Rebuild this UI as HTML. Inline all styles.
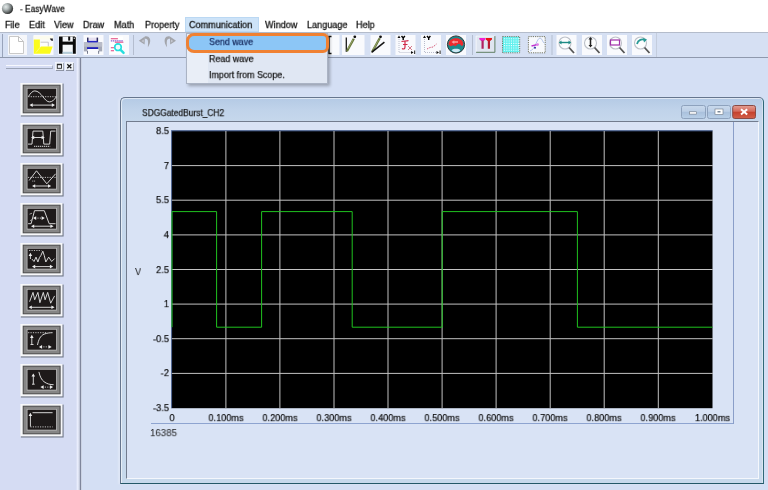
<!DOCTYPE html>
<html>
<head>
<meta charset="utf-8">
<title>EasyWave</title>
<style>
html,body{margin:0;padding:0;}
body{width:768px;height:490px;overflow:hidden;position:relative;background:#d4dff4;font-family:"Liberation Sans",sans-serif;font-size:9.5px;color:#111;}
.abs{position:absolute;}
#titlebar{left:0;top:0;width:768px;height:17px;background:#fff;}
#menubar{left:0;top:17px;width:768px;height:15px;background:#fff;}
.mi{position:absolute;top:19.5px;-webkit-text-stroke:.3px #111;transform:scale(.91,.9);transform-origin:0 0;will-change:transform;font-size:10px;line-height:11px;color:#111;white-space:nowrap;}
#toolbar{left:0;top:32px;width:768px;height:26.2px;background:#d6e0f3;border-top:1px solid #b4bccb;border-bottom:1.6px solid #8f99ad;box-sizing:border-box;}
#leftpanel{left:0;top:58.2px;width:79px;height:432px;background:#d5dcf3;}
#vsep{left:75.6px;top:58.2px;width:3.2px;height:432px;background:linear-gradient(90deg,rgba(234,238,252,0),#e9edfc 45%,#e9edfc 70%,#cdd3e4);border-right:0;}
#vsep2{left:79.7px;top:58.2px;width:1.5px;height:432px;background:#7f869c;box-shadow:-1px 0 0 #c3c9da,1px 0 0 #cbd3e4;}
#mdi{left:80px;top:58.2px;width:688px;height:432px;background:#d6e0f3;}
#dropdown{left:186px;top:32.5px;width:142.4px;height:51.7px;background:linear-gradient(90deg,#e9eef7 0,#e9eef7 21px,#e0e7f3 21px);border:1px solid #aab3c4;box-sizing:border-box;box-shadow:2px 2px 3px rgba(0,0,0,.28);}
.di{position:absolute;left:24px;-webkit-text-stroke:.25px #111;transform:scale(.89,.9);transform-origin:0 0;will-change:transform;font-size:10px;line-height:11px;color:#111;white-space:nowrap;}
#child{left:120px;top:97px;width:644px;height:387px;box-sizing:border-box;border:1.2px solid #66768e;border-right-color:#2f6878;border-bottom-color:#245868;border-radius:5px 5px 0 0;background:linear-gradient(#b4cae5,#c0d3ea 12px,#c6d8ec 24px,#c7d9ec);box-shadow:inset 1px 1px 0 rgba(255,255,255,.55),inset -1px 0 0 rgba(255,255,255,.35),-2px 0 2px rgba(255,255,255,.25);}
#client{left:126.3px;top:121px;width:633px;height:357.5px;box-sizing:border-box;border:1.2px solid #727c8e;border-right-color:#f4f7fc;border-bottom-color:#f4f7fc;background:#d9e3f5;}
.yl{-webkit-text-stroke:.2px #111;position:absolute;width:26px;text-align:right;font-size:10px;line-height:11px;color:#000;left:142.8px;margin-top:.5px;transform:scale(.93,.9);transform-origin:100% 100%;will-change:transform;}
.xl{-webkit-text-stroke:.2px #111;position:absolute;width:60px;text-align:center;font-size:10px;line-height:11px;color:#000;top:412px;transform:scale(.915,.9);transform-origin:50% 100%;will-change:transform;}
</style>
</head>
<body>
<div id="titlebar" class="abs"></div>
<svg class="abs" style="left:1.2px;top:1.6px" width="13" height="13" viewBox="0 0 13 13"><defs><radialGradient id="gb" cx="35%" cy="35%" r="70%"><stop offset="0" stop-color="#e4eaea"/><stop offset=".35" stop-color="#b4bcbc"/><stop offset=".7" stop-color="#6a7070"/><stop offset="1" stop-color="#242424"/></radialGradient></defs><circle cx="6.5" cy="6.5" r="5.6" fill="url(#gb)"/></svg>
<div class="abs" style="left:20px;top:3.5px;font-size:10px;line-height:11px;transform:scale(.836,.9);transform-origin:0 0;will-change:transform;-webkit-text-stroke:.3px #111;">- EasyWave</div>
<div id="menubar" class="abs"></div>
<div class="abs" style="left:184.5px;top:17px;width:74.2px;height:14.7px;box-sizing:border-box;background:#cde3f8;border:1px solid #bbd8f3;"></div>
<div class="mi" style="left:5px">File</div>
<div class="mi" style="left:29px">Edit</div>
<div class="mi" style="left:54px">View</div>
<div class="mi" style="left:83px">Draw</div>
<div class="mi" style="left:114px">Math</div>
<div class="mi" style="left:145px">Property</div>
<div class="mi" style="left:189px">Communication</div>
<div class="mi" style="left:265px">Window</div>
<div class="mi" style="left:307px">Language</div>
<div class="mi" style="left:356px">Help</div>
<div id="toolbar" class="abs"></div>

<!-- toolbar icons -->
<div class="abs" style="left:2.2px;top:34px;width:1px;height:23px;background:#98a3ba;"></div>
<svg class="abs" style="left:0;top:0" width="768" height="60" viewBox="0 0 768 60">
<!-- new -->
<g transform="translate(8,35)"><rect x="0" y="0" width="19" height="20" fill="#f6f7fa"/><path d="M1.5 1.5H10.5L15.5 6.5V18.5H1.5Z" fill="#fff" stroke="#c9c9c9" stroke-width="1"/><path d="M10.5 1.5V6.5H15.5" fill="none" stroke="#c0c0c0" stroke-width="1"/></g>
<!-- open -->
<g transform="translate(33.5,35)"><rect x="0" y="0" width="20" height="20" fill="#f9fafd"/><rect x="0" y="1" width="19.500" height="3.600" fill="#fcfcef"/><rect x="7.100" y="5.800" width="8.100" height="5.800" fill="#fdfdfd"/><path d="M7.100 7.200H14.800V11.600" fill="none" stroke="#b9b9bf" stroke-width=".8"/><path d="M16.300 3.400H19.300V6L17.600 5.600Z" fill="#1a1a22"/><path d="M.3 4.400H6.400V12.500L7.500 11.600H19.200L16.500 18.700H.3Z" fill="#fbfb1e"/><path d="M6.600 12.300L2.500 17.500" stroke="#fdfd8a" stroke-width=".7"/></g>
<!-- save -->
<g transform="translate(58.5,35)"><rect x="0" y="0" width="18" height="20" fill="#f9fafd"/><path d="M.5 1.600H16.300L17.300 2.600V18.800H.5Z" fill="#0a0a0a"/><rect x="4.100" y="1.600" width="10.200" height="5" fill="#f6f8fb"/><rect x="9.700" y="1.600" width="2" height="4" fill="#0a0a0a"/><rect x="4.100" y="9.700" width="10.200" height="9.100" fill="#f4f7f9"/><rect x="4.100" y="16.800" width="10.200" height="2" fill="#b4ccd9"/><rect x="15.200" y="2.600" width="1.100" height="1.400" fill="#ddd"/></g>
<!-- print -->
<g transform="translate(83.5,35)"><rect x="0" y="0" width="20" height="20" fill="#f9fafd"/><rect x="5" y="2.600" width="8.500" height="3.500" fill="#e6e0f0"/><rect x="3.500" y="2.600" width="1.500" height="4.800" fill="#2b2b5e"/><rect x="13.100" y="2.600" width="1.500" height="4.800" fill="#2b2b5e"/><rect x=".4" y="7.200" width="18.300" height="9.200" fill="#a4a8b6"/><rect x=".4" y="7.200" width="18.300" height="4.500" fill="#b9bcc9"/><rect x="4" y="5.900" width="10.200" height="1.500" fill="#2626c4"/><rect x="3.500" y="12.200" width="11.100" height="1.800" fill="#1c1cb8"/><rect x="4" y="14" width="11.100" height="4.800" fill="#f9fafd"/><rect x="3.500" y="16" width=".8" height="2.800" fill="#555a70"/><rect x="14.800" y="16" width=".8" height="2.800" fill="#555a70"/></g>
<!-- preview -->
<g transform="translate(109,35)"><rect x="0" y="0" width="20" height="20" fill="#f9fafd"/><rect x=".8" y="1.500" width="13.200" height="17.300" fill="#fff"/><path d="M1.800 3.800H8.900M1.800 12.700H5.400M1.800 15.800H5" stroke="#e0407f" stroke-width="1.100"/><path d="M1.800 5.800H14" stroke="#8a5fd0" stroke-width="1.300" stroke-dasharray="1.500 .6"/><path d="M5.800 7.200H14.400" stroke="#e0407f" stroke-width="1"/><circle cx="9" cy="12.200" r="3.300" fill="#ecffff" stroke="#27dede" stroke-width="1.700"/><path d="M11.600 14.800L14.600 17.900" stroke="#27dede" stroke-width="2.400" stroke-linecap="round"/></g>
<!-- sep -->
<rect x="133" y="35" width="1" height="20" fill="#b4bdcf"/>
<!-- undo -->
<g transform="translate(138,35)"><path d="M6.900 1.400C9 1 11 1.600 12 4C12.800 6.500 11.500 10 9.900 12.200C9.800 10.500 10.300 8 9.900 5.800C9.500 4.200 8.300 3.700 6.900 3.800Z" fill="#a2a4aa"/><path d="M.8 5.800L6.900 1.400L6.600 9.500Z" fill="#a2a4aa"/><path d="M5.800 4.500L3.500 6L5.700 7.500Z" fill="#c6c9d2"/></g>
<!-- redo -->
<g transform="translate(176.800,35) scale(-1,1)"><path d="M6.900 1.400C9 1 11 1.600 12 4C12.800 6.500 11.500 10 9.900 12.200C9.800 10.500 10.300 8 9.900 5.800C9.500 4.200 8.300 3.700 6.900 3.800Z" fill="#a2a4aa"/><path d="M.8 5.800L6.900 1.400L6.600 9.500Z" fill="#a2a4aa"/><path d="M5.800 4.500L3.500 6L5.700 7.500Z" fill="#c6c9d2"/></g>
<!-- partial icon -->
<g transform="translate(319.5,35)"><rect x="0" y="0" width="20" height="20" fill="#f9fafd"/><path d="M12 1.500H9.500V18.500H12" fill="none" stroke="#111" stroke-width="1.400"/></g>
<!-- pen1 -->
<g transform="translate(344.5,35)"><rect x="-2.500" y="0" width="22.500" height="20" fill="#f9fafd"/><path d="M1.800 2.600V16.800" stroke="#1a1a1a" stroke-width="1.300"/><path d="M2.400 16.300L9.300 3.800" stroke="#66763a" stroke-width="2.300"/><path d="M3.300 14L8.300 5" stroke="#a8b47a" stroke-width=".7"/><circle cx="10.300" cy="1.800" r="1.400" fill="#111"/></g>
<!-- pen2 -->
<g transform="translate(370,35)"><rect x=".5" y="0" width="20" height="20" fill="#f9fafd"/><path d="M2.200 16.800L9.700 3.300" stroke="#66763a" stroke-width="2.300"/><path d="M3.300 14.300L8.700 4.800" stroke="#a8b47a" stroke-width=".7"/><path d="M1.600 17.300L14.400 7.200" stroke="#141414" stroke-width="1.500"/><circle cx="10.500" cy="1.800" r="1.400" fill="#111"/></g>
<!-- Fx -->
<g transform="translate(395.500,35)"><rect x="0" y="0" width="20" height="20" fill="#f9fafd"/><path d="M3.500 2V17.500H16" fill="none" stroke="#b9bccb" stroke-width="1" stroke-dasharray="1 1"/><path d="M2 3L3.500 .5L5 3Z" fill="#111"/><path d="M15.500 16L18 17.500L15.500 19Z" fill="#111"/><path d="M6 1L7.700 3L9.400 1M7.700 3V5" stroke="#000" stroke-width="1.400" fill="none"/><path d="M6 6.500C8 5.500 11 6.500 13 5.500M9.500 6V12C9.500 14 8 14.500 6.500 13.500M7.500 9.500H12" stroke="#d02848" stroke-width="1.200" fill="none"/><path d="M12.500 11L16.500 15M16.500 11L12.500 15" stroke="#d06a7c" stroke-width=".9"/><rect x="18.500" y="15.500" width="1.200" height="3.500" fill="#444"/></g>
<!-- graph -->
<g transform="translate(421,35)"><rect x="0" y="0" width="20" height="20" fill="#f9fafd"/><path d="M3.500 2V17.500H16" fill="none" stroke="#b9bccb" stroke-width="1" stroke-dasharray="1 1"/><path d="M2 3L3.500 .5L5 3Z" fill="#111"/><path d="M15.500 16L18 17.500L15.500 19Z" fill="#111"/><path d="M6 1L7.700 3L9.400 1M7.700 3V5" stroke="#000" stroke-width="1.400" fill="none"/><path d="M6 14L9 12.500L12 12L15.500 9" stroke="#d04a6a" stroke-width=".9" fill="none" stroke-dasharray="1.500 1"/><rect x="18.500" y="15.500" width="1.200" height="3.500" fill="#444"/></g>
<!-- circle -->
<g transform="translate(446,35)"><rect x="0" y="0" width="20" height="20" fill="#f9fafd"/><circle cx="10" cy="9.500" r="8.600" fill="#1d8a8c" stroke="#2a3438" stroke-width="1"/><path d="M2.400 9.500C2.400 5.500 5.500 3.200 10 3.200C14.500 3.200 17.400 5.500 17.400 9.500C16.800 10.800 15.800 11 15 10.600C14.200 8.800 12.200 8.600 11 9.800L9.600 11.200L7.500 10.200L4.500 11.200Z" fill="#ee2a2e"/><path d="M5.500 7L8.300 5.200V6.300H12V7.800H8.300V8.900Z" fill="#f7a0a0"/><path d="M5.600 15.200C7.500 13.300 12.500 13.300 14.400 15.200C12.800 17.800 7.200 17.800 5.600 15.200Z" fill="#cfe8f4"/></g>
<rect x="472" y="35" width="1" height="20" fill="#b4bdcf"/>
<!-- TT -->
<g transform="translate(476.5,35)"><rect x="-.4" y="1.100" width="18.800" height="16.200" fill="#dfe5f0"/><path d="M-.4 17.300V1.100H18.400" fill="none" stroke="#f4f6fa" stroke-width="1"/><path d="M18.400 1.100V17.300H-.4" fill="none" stroke="#5f7d62" stroke-width="1"/><path d="M3.100 3.100H8.700V4.300L7.200 6V13.800H5V6L3.100 4.300Z" fill="#b0205e"/><path d="M3.100 3.100H8.700V4.600L7.600 5.600H4.400L3.100 4.600Z" fill="#f21ed2"/><path d="M9.400 3.100H15.300V4.300L13.500 6V13.800H11.300V6L9.400 4.300Z" fill="#b81a30"/><path d="M9.400 3.100H15.300V4.600L14 5.600H10.800L9.400 4.600Z" fill="#ea1414"/></g>
<!-- grid -->
<g transform="translate(501.5,35)"><rect x="1" y="1.600" width="17.200" height="16.200" fill="#eaffff"/><path d="M1.9 1.600V17.800M4.2 1.600V17.800M6.5 1.600V17.800M8.8 1.600V17.800M11.1 1.600V17.800M13.4 1.600V17.800M15.7 1.600V17.800M1 2.6H18.200M1 4.9H18.200M1 7.2H18.200M1 9.5H18.200M1 11.8H18.200M1 14.1H18.200M1 16.4H18.200" stroke="#62f0ee" stroke-width="1.200"/><rect x="1" y="1.600" width="17.200" height="16.200" fill="none" stroke="#6a6a5a" stroke-width=".9" stroke-dasharray="1.200 1"/></g>
<!-- chart -->
<g transform="translate(527,35)"><rect x="1.400" y="1.600" width="16.800" height="16.200" fill="#f8fafd"/><rect x="1.400" y="1.600" width="16.800" height="16.200" fill="none" stroke="#6a6a54" stroke-width=".9" stroke-dasharray="1.200 1"/><path d="M3 16C8 15 10 3 13 3C15 3 15.500 7 17.500 8.500" stroke="#b4c6ea" stroke-width="1" fill="none"/><path d="M4.500 11L11 9.300" stroke="#c030d0" stroke-width="1.300" fill="none"/><circle cx="10.600" cy="9.600" r="1.400" fill="#e080e8"/><circle cx="8" cy="12.700" r="1" fill="#3030a0"/></g>
<rect x="551.500" y="35" width="1" height="20" fill="#b4bdcf"/>
<!-- zoom icons -->
<g transform="translate(556.500,35)"><rect x="0" y="0" width="20" height="20" fill="#f9fafd"/><circle cx="8.500" cy="8" r="6" fill="#fcfdfe" stroke="#bcc0c8" stroke-width="1.100"/><path d="M12.500 12.500L17.500 18" stroke="#555" stroke-width="1.800"/><path d="M3 7.500H14" stroke="#1d8a84" stroke-width="1.400"/><path d="M2.500 7.500L5 5.500V9.500ZM14.500 7.500L12 5.500V9.500Z" fill="#1d8a84"/></g>
<g transform="translate(582,35)"><rect x="0" y="0" width="20" height="20" fill="#f9fafd"/><circle cx="8.500" cy="8" r="6" fill="#fcfdfe" stroke="#bcc0c8" stroke-width="1.100"/><path d="M12.500 12.500L17.500 18" stroke="#555" stroke-width="1.800"/><path d="M8.500 3V11" stroke="#222" stroke-width="1.500"/><path d="M6.500 4.500L8.500 2L10.500 4.500ZM6.500 10L8.500 12.500L10.500 10Z" fill="#222"/></g>
<g transform="translate(607,35)"><rect x="0" y="0" width="20" height="20" fill="#f9fafd"/><circle cx="8.500" cy="8" r="6" fill="#fcfdfe" stroke="#bcc0c8" stroke-width="1.100"/><path d="M12.500 12.500L17.500 18" stroke="#555" stroke-width="1.800"/><rect x="3.500" y="5" width="9" height="5" fill="#fff" stroke="#a030a8" stroke-width="1.200"/></g>
<g transform="translate(632,35)"><rect x="0" y="0" width="20" height="20" fill="#f9fafd"/><circle cx="8.500" cy="8" r="6" fill="#fcfdfe" stroke="#bcc0c8" stroke-width="1.100"/><path d="M12.500 12.500L17.500 18" stroke="#555" stroke-width="1.800"/><path d="M5 9C6 5 10 3 13.500 5.500" stroke="#2a9a96" stroke-width="1.800" fill="none"/><path d="M11 3L15 4.500L12 7.500Z" fill="#2a9a96"/></g>
<rect x="656" y="33" width="1" height="24" fill="#c4cddd"/>
</svg>
<div id="leftpanel" class="abs"></div>
<div class="abs" style="left:5.5px;top:64.8px;width:47px;height:4.4px;box-sizing:border-box;border-top:1.2px solid #f6f8fe;border-bottom:1.2px solid #9ca5b8;border-right:1px solid #a9b1c3;"></div>
<svg class="abs" style="left:55px;top:62px" width="20" height="10" viewBox="0 0 20 10"><rect x="1" y="1" width="8" height="7.700" fill="#5f6675"/><rect x=".5" y=".5" width="7.600" height="7.300" fill="#eef2f8" stroke="#fafcff" stroke-width=".6"/><rect x="2.300" y="2.300" width="4.200" height="4" fill="#eef2f8" stroke="#2a2a2a" stroke-width=".9"/><rect x="2" y="1.900" width="4.800" height="1.300" fill="#2a2a2a"/><rect x="11" y="1" width="8" height="7.700" fill="#5f6675"/><rect x="10.500" y=".5" width="7.600" height="7.300" fill="#eef2f8" stroke="#fafcff" stroke-width=".6"/><path d="M12.300 2.300L16.300 6.300M16.300 2.300L12.300 6.300" stroke="#1a1a1a" stroke-width="1.300"/></svg>
<svg class="abs" style="left:19px;top:81.70px" width="46" height="35" viewBox="-1.3 -1 46 35"><rect x=".6" y=".6" width="42.700" height="32.900" fill="#6f7686"/><rect x="0" y="0" width="42.200" height="32.400" fill="#f7f8fa"/><rect x="2.900" y="2.200" width="36.900" height="27.600" fill="#868686" stroke="#484848" stroke-width="1"/><rect x="6.400" y="4.900" width="30.200" height="21.600" fill="#bdbdbd"/><rect x="7.200" y="5.700" width="28.600" height="20" fill="#1e1a1a"/><g transform="translate(7.200,5.700)"><path d="M.8 8C3 4.500 5 2.200 7.300 2.200C10.500 2.200 13 5 15.400 8C18 11.200 19.500 13.200 22.100 13.200C24.500 13.200 27 11 29 8" stroke="#dedede" stroke-width=".95" fill="none"/><path d="M.8 8H29" stroke="#cfcfcf" stroke-width=".9" fill="none" stroke-dasharray="1.2 1.2"/><path d="M4 16.4H25.5" stroke="#dedede" stroke-width=".95" fill="none"/><path d="M2 16.4L5.2 14.599999999999998V18.2ZM27.5 16.4L24.3 14.599999999999998V18.2Z" fill="#ececec"/></g></svg>
<svg class="abs" style="left:19px;top:121.88px" width="46" height="35" viewBox="-1.3 -1 46 35"><rect x=".6" y=".6" width="42.700" height="32.900" fill="#6f7686"/><rect x="0" y="0" width="42.200" height="32.400" fill="#f7f8fa"/><rect x="2.900" y="2.200" width="36.900" height="27.600" fill="#868686" stroke="#484848" stroke-width="1"/><rect x="6.400" y="4.900" width="30.200" height="21.600" fill="#bdbdbd"/><rect x="7.200" y="5.700" width="28.600" height="20" fill="#1e1a1a"/><g transform="translate(7.200,5.700)"><path d="M.5 15.400H4.500L5.500 2.400H15.300L16.300 15.400H22.200L23.200 2.400H28" stroke="#dedede" stroke-width=".95" fill="none"/><path d="M5.5 8.8H15.3" stroke="#dedede" stroke-width=".95" fill="none"/><path d="M3.5 8.8L6.7 7.000000000000001V10.600000000000001ZM17.3 8.8L14.100000000000001 7.000000000000001V10.600000000000001Z" fill="#ececec"/><path d="M6.500 17.700H22.700" stroke="#b5b5b5" stroke-width="1.100" stroke-dasharray="1.300 .7"/></g></svg>
<svg class="abs" style="left:19px;top:162.05px" width="46" height="35" viewBox="-1.3 -1 46 35"><rect x=".6" y=".6" width="42.700" height="32.900" fill="#6f7686"/><rect x="0" y="0" width="42.200" height="32.400" fill="#f7f8fa"/><rect x="2.900" y="2.200" width="36.900" height="27.600" fill="#868686" stroke="#484848" stroke-width="1"/><rect x="6.400" y="4.900" width="30.200" height="21.600" fill="#bdbdbd"/><rect x="7.200" y="5.700" width="28.600" height="20" fill="#1e1a1a"/><g transform="translate(7.200,5.700)"><path d="M1.600 11.800L9 2.100L19.300 15.100L28.100 5.100" stroke="#dedede" stroke-width=".95" fill="none"/><path d="M.5 8.700H29" stroke="#cfcfcf" stroke-width=".9" fill="none" stroke-dasharray="1.2 1.2"/><path d="M4.800 12.400H8" stroke="#ccc" stroke-width=".9" stroke-dasharray="1 .8"/><path d="M6.5 17.3H21.7" stroke="#dedede" stroke-width=".95" fill="none"/><path d="M4.5 17.3L7.7 15.5V19.1ZM23.7 17.3L20.5 15.5V19.1Z" fill="#ececec"/></g></svg>
<svg class="abs" style="left:19px;top:202.22px" width="46" height="35" viewBox="-1.3 -1 46 35"><rect x=".6" y=".6" width="42.700" height="32.900" fill="#6f7686"/><rect x="0" y="0" width="42.200" height="32.400" fill="#f7f8fa"/><rect x="2.900" y="2.200" width="36.900" height="27.600" fill="#868686" stroke="#484848" stroke-width="1"/><rect x="6.400" y="4.900" width="30.200" height="21.600" fill="#bdbdbd"/><rect x="7.200" y="5.700" width="28.600" height="20" fill="#1e1a1a"/><g transform="translate(7.200,5.700)"><path d="M.6 15H3.600L7 2H16.800L21.700 15H28" stroke="#dedede" stroke-width=".95" fill="none"/><path d="M7.5 9.4H15.3" stroke="#cfcfcf" stroke-width=".9" fill="none" stroke-dasharray="1.2 1.2"/><path d="M5.5 9.4L8.7 7.6000000000000005V11.200000000000001ZM17.3 9.4L14.100000000000001 7.6000000000000005V11.200000000000001Z" fill="#ececec"/><path d="M5.5 17.5H24.1" stroke="#dedede" stroke-width=".95" fill="none"/><path d="M3.5 17.5L6.7 15.7V19.3ZM26.1 17.5L22.900000000000002 15.7V19.3Z" fill="#ececec"/><path d="M2 5.500L4.500 4.500M2.500 12L4.500 11" stroke="#bbb" stroke-width=".8"/></g></svg>
<svg class="abs" style="left:19px;top:242.40px" width="46" height="35" viewBox="-1.3 -1 46 35"><rect x=".6" y=".6" width="42.700" height="32.900" fill="#6f7686"/><rect x="0" y="0" width="42.200" height="32.400" fill="#f7f8fa"/><rect x="2.900" y="2.200" width="36.900" height="27.600" fill="#868686" stroke="#484848" stroke-width="1"/><rect x="6.400" y="4.900" width="30.200" height="21.600" fill="#bdbdbd"/><rect x="7.200" y="5.700" width="28.600" height="20" fill="#1e1a1a"/><g transform="translate(7.200,5.700)"><path d="M4.500 10.400L6.500 12.800L8.500 8.400L10.400 13.300L11.900 8.900L13.300 7L15.300 2.500L16.800 7L18.300 13.300L21.200 8.400L24.200 12.800L27.100 9.900" stroke="#dedede" stroke-width=".95" fill="none"/><path d="M1.600 1.800H13.900" stroke="#cfcfcf" stroke-width=".9" fill="none" stroke-dasharray="1.2 1.2"/><path d="M2.9 6V10.3" stroke="#dedede" stroke-width=".95" fill="none"/><path d="M2.9 4L1.0999999999999999 7.2H4.7Z" fill="#ececec"/><path d="M6.5 17.9H23.6" stroke="#dedede" stroke-width=".95" fill="none"/><path d="M4.5 17.9L7.7 16.099999999999998V19.7ZM25.6 17.9L22.400000000000002 16.099999999999998V19.7Z" fill="#ececec"/></g></svg>
<svg class="abs" style="left:19px;top:282.57px" width="46" height="35" viewBox="-1.3 -1 46 35"><rect x=".6" y=".6" width="42.700" height="32.900" fill="#6f7686"/><rect x="0" y="0" width="42.200" height="32.400" fill="#f7f8fa"/><rect x="2.900" y="2.200" width="36.900" height="27.600" fill="#868686" stroke="#484848" stroke-width="1"/><rect x="6.400" y="4.900" width="30.200" height="21.600" fill="#bdbdbd"/><rect x="7.200" y="5.700" width="28.600" height="20" fill="#1e1a1a"/><g transform="translate(7.200,5.700)"><path d="M2.100 12L5.500 2.700L7.200 10.100L10.400 2.700L12.400 13L15.800 2.700L17.600 10.100L20.200 2.700L23.200 13.500L27.100 6.200" stroke="#dedede" stroke-width=".95" fill="none"/><path d="M3.1 17.6H25.1" stroke="#dedede" stroke-width=".95" fill="none"/><path d="M1.1 17.6L4.300000000000001 15.8V19.400000000000002ZM27.1 17.6L23.900000000000002 15.8V19.400000000000002Z" fill="#ececec"/></g></svg>
<svg class="abs" style="left:19px;top:322.75px" width="46" height="35" viewBox="-1.3 -1 46 35"><rect x=".6" y=".6" width="42.700" height="32.900" fill="#6f7686"/><rect x="0" y="0" width="42.200" height="32.400" fill="#f7f8fa"/><rect x="2.900" y="2.200" width="36.900" height="27.600" fill="#868686" stroke="#484848" stroke-width="1"/><rect x="6.400" y="4.900" width="30.200" height="21.600" fill="#bdbdbd"/><rect x="7.200" y="5.700" width="28.600" height="20" fill="#1e1a1a"/><g transform="translate(7.200,5.700)"><path d="M10 15.300C11 10 13 6 16.500 4.500C19.500 3.300 22 3 25.100 3" stroke="#dedede" stroke-width=".95" fill="none"/><path d="M.6 3H19.300" stroke="#cfcfcf" stroke-width=".9" fill="none" stroke-dasharray="1.2 1.2"/><path d="M4.3 7V14.8" stroke="#dedede" stroke-width=".95" fill="none"/><path d="M4.3 5L2.5 8.2H6.1Z" fill="#ececec"/><path d="M3 14.800H6" stroke="#dedede" stroke-width=".95" fill="none"/><path d="M13.4 17.2H22.2" stroke="#cfcfcf" stroke-width=".9" fill="none" stroke-dasharray="1.2 1.2"/><path d="M11.4 17.2L14.600000000000001 15.399999999999999V19.0ZM24.2 17.2L21.0 15.399999999999999V19.0Z" fill="#ececec"/></g></svg>
<svg class="abs" style="left:19px;top:362.92px" width="46" height="35" viewBox="-1.3 -1 46 35"><rect x=".6" y=".6" width="42.700" height="32.900" fill="#6f7686"/><rect x="0" y="0" width="42.200" height="32.400" fill="#f7f8fa"/><rect x="2.900" y="2.200" width="36.900" height="27.600" fill="#868686" stroke="#484848" stroke-width="1"/><rect x="6.400" y="4.900" width="30.200" height="21.600" fill="#bdbdbd"/><rect x="7.200" y="5.700" width="28.600" height="20" fill="#1e1a1a"/><g transform="translate(7.200,5.700)"><path d="M11.400 2.200C12.500 7 14 10 16.500 12C19.500 14.200 22.500 15 26.100 15" stroke="#dedede" stroke-width=".95" fill="none"/><path d="M5.8 5.7V14.5" stroke="#dedede" stroke-width=".95" fill="none"/><path d="M5.8 3.7L4.0 6.9H7.6Z" fill="#ececec"/><path d="M4.500 14.500H7.200" stroke="#dedede" stroke-width=".95" fill="none"/><path d="M14.9 17.4H23.6" stroke="#cfcfcf" stroke-width=".9" fill="none" stroke-dasharray="1.2 1.2"/><path d="M12.9 17.4L16.1 15.599999999999998V19.2ZM25.6 17.4L22.400000000000002 15.599999999999998V19.2Z" fill="#ececec"/></g></svg>
<svg class="abs" style="left:19px;top:403.10px" width="46" height="35" viewBox="-1.3 -1 46 35"><rect x=".6" y=".6" width="42.700" height="32.900" fill="#6f7686"/><rect x="0" y="0" width="42.200" height="32.400" fill="#f7f8fa"/><rect x="2.900" y="2.200" width="36.900" height="27.600" fill="#868686" stroke="#484848" stroke-width="1"/><rect x="6.400" y="4.900" width="30.200" height="21.600" fill="#bdbdbd"/><rect x="7.200" y="5.700" width="28.600" height="20" fill="#1e1a1a"/><g transform="translate(7.200,5.700)"><path d="M5 3H25.100" stroke="#dedede" stroke-width=".95" fill="none"/><path d="M2.900 17.200H25.100" stroke="#cfcfcf" stroke-width=".9" fill="none" stroke-dasharray="1.2 1.2"/><path d="M2.9 5V16.9" stroke="#dedede" stroke-width=".95" fill="none"/><path d="M2.9 3L1.0999999999999999 6.2H4.7Z" fill="#ececec"/></g></svg>
<div id="vsep" class="abs"></div><div id="vsep2" class="abs"></div>

<!-- child window -->
<div id="child" class="abs"></div>
<div id="client" class="abs"></div>
<div class="abs" style="left:141.8px;top:107.8px;font-size:10px;line-height:11px;transform:scale(.84,.9);transform-origin:0 0;will-change:transform;-webkit-text-stroke:.25px #111;color:#1a1a1a;">SDGGatedBurst_CH2</div>

<div class="yl" style="top:124.5px">8.5</div>
<div class="yl" style="top:159.1px">7</div>
<div class="yl" style="top:193.8px">5.5</div>
<div class="yl" style="top:228.4px">4</div>
<div class="yl" style="top:263.0px">2.5</div>
<div class="yl" style="top:297.6px">1</div>
<div class="yl" style="top:332.2px">-0.5</div>
<div class="yl" style="top:366.9px">-2</div>
<div class="yl" style="top:401.5px">-3.5</div>
<div class="xl" style="left:141.6px">0</div>
<div class="xl" style="left:195.6px">0.100ms</div>
<div class="xl" style="left:249.6px">0.200ms</div>
<div class="xl" style="left:303.6px">0.300ms</div>
<div class="xl" style="left:357.7px">0.400ms</div>
<div class="xl" style="left:411.8px">0.500ms</div>
<div class="xl" style="left:465.8px">0.600ms</div>
<div class="xl" style="left:519.8px">0.700ms</div>
<div class="xl" style="left:573.9px">0.800ms</div>
<div class="xl" style="left:628.0px">0.900ms</div>
<div class="xl" style="left:670.2px;text-align:right;transform-origin:100% 100%">1.000ms</div>
<div class="abs" style="left:134.6px;top:266.6px;font-size:10px;line-height:11px;color:#111;transform:scale(.92,.9);transform-origin:0 0;will-change:transform;">V</div>
<div class="abs" style="left:150px;top:426.9px;font-size:10px;line-height:11px;transform:scale(.97,.9);transform-origin:0 100%;will-change:transform;color:#1a1a1a;">16385</div>
<div class="abs" style="left:150.5px;top:423.2px;width:583.5px;height:1.3px;background:#8ea4d0;"></div>
<div class="abs" style="left:733px;top:122px;width:1px;height:302px;background:#8a9ec8;"></div>
<svg class="abs" style="left:680px;top:104.1px" width="78" height="17" viewBox="0 0 78 17">
<defs><linearGradient id="gbtn" x1="0" y1="0" x2="0" y2="1"><stop offset="0" stop-color="#c9d9ec"/><stop offset=".45" stop-color="#bccfe6"/><stop offset=".5" stop-color="#a9c0dc"/><stop offset="1" stop-color="#b9d0e8"/></linearGradient>
<linearGradient id="gcl" x1="0" y1="0" x2="0" y2="1"><stop offset="0" stop-color="#e3a094"/><stop offset=".45" stop-color="#d4695a"/><stop offset=".5" stop-color="#c4402c"/><stop offset="1" stop-color="#d2604a"/></linearGradient></defs>
<rect x="1.500" y="1.500" width="24" height="13" rx="2" fill="url(#gbtn)" stroke="#8ea2bd" stroke-width="1"/>
<rect x="27.500" y="1.500" width="23" height="13" rx="2" fill="url(#gbtn)" stroke="#8ea2bd" stroke-width="1"/>
<rect x="52.700" y="1.500" width="22.800" height="13" rx="2" fill="url(#gcl)" stroke="#8a4a44" stroke-width="1"/>
<rect x="9.500" y="7.800" width="7" height="2.300" fill="#fff" stroke="#6a7684" stroke-width=".6"/>
<rect x="35" y="5" width="8" height="5.500" fill="#fff" stroke="#6a7684" stroke-width=".6"/><rect x="37.500" y="7" width="3" height="1.500" fill="#7a8796"/>
<path d="M61 5.300L67.200 10.500M67.200 5.300L61 10.500" stroke="#fff" stroke-width="2"/>
</svg>
<!-- plot -->
<svg class="abs" style="left:0;top:0" width="768" height="490" viewBox="0 0 768 490">
<rect x="171.3" y="130.4" width="541.2" height="277.8" fill="#000"/><path d="M171.3 130.8H712.5" stroke="#5f7fc0" stroke-width=".8"/><path d="M171.6 130.4V408.2" stroke="#5f7fc0" stroke-width=".7"/>
<g stroke="#c2c2c2" stroke-width="1" fill="none" transform="translate(.3,0)">
<path d="M225.6 131V408M279.6 131V408M333.7 131V408M387.7 131V408M441.8 131V408M495.8 131V408M549.9 131V408M603.9 131V408M658 131V408"/>
<path d="M171.5 165.6H712.5M171.5 200.2H712.5M171.5 234.9H712.5M171.5 269.5H712.5M171.5 304.1H712.5M171.5 338.7H712.5M171.5 373.4H712.5"/>
</g>
<path d="M172 327.2V211.6H216.6V327.2H261.6V211.6H352.2V327.2H442.2V211.6H577.4V327.2H712.5" stroke="#1fc21f" stroke-width="1" fill="none"/>
</svg>

<div id="dropdown" class="abs"></div>
<div class="abs" style="left:188.5px;top:35.5px;width:138px;height:14.5px;background:#8cc6f6;"></div>
<div class="abs" style="left:186.2px;top:32.9px;width:142.6px;height:20.3px;box-sizing:border-box;border:3.8px solid #f08132;border-radius:8px 6px 6px 8px;"></div>
<div class="di" style="left:209px;top:37.2px;color:#15285c;-webkit-text-stroke:.25px #15285c">Send wave</div>
<div class="di" style="left:209px;top:53.5px">Read wave</div>
<div class="di" style="left:209px;top:70px">Import from Scope.</div>
</body>
</html>
